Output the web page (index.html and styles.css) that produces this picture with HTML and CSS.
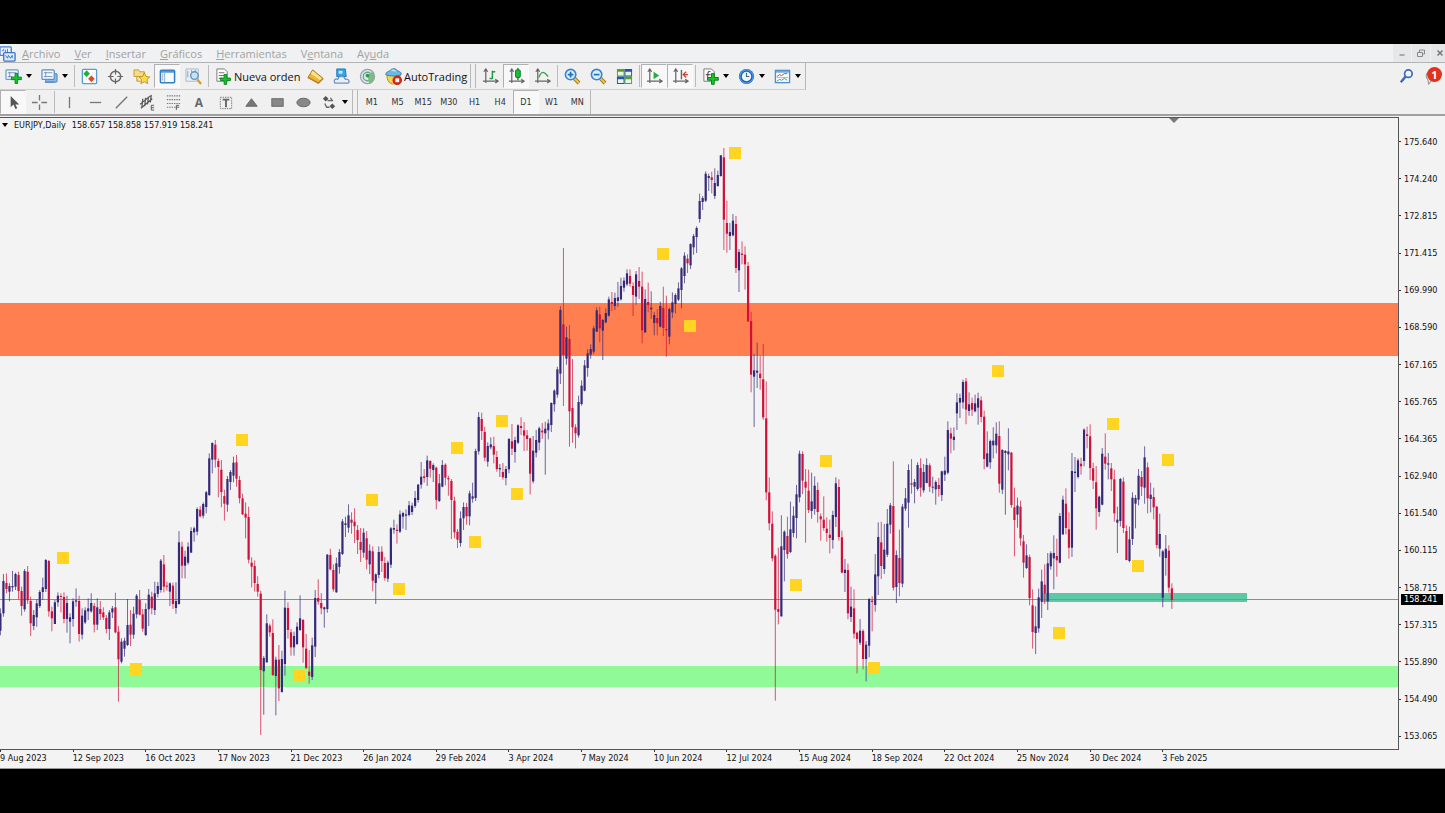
FILE: index.html
```html
<!DOCTYPE html>
<html lang="es">
<head>
    <meta charset="UTF-8">
    <title>EURJPY,Daily</title>
    <link rel="stylesheet" href="styles.css">
</head>
<body>
    <svg class="sprite" aria-hidden="true">
        <symbol id="plus" viewBox="0 0 18 18"><path d="M7 1h4v6h6v4h-6v6H7v-6H1V7h6z" fill="#19c52c" stroke="#087d18" stroke-width="1.4"/></symbol>
        <symbol id="app" viewBox="0 0 18 18"><rect x="1" y="2" width="12" height="9" rx="1" fill="#eaf3ff" stroke="#4a7fc8" stroke-width="1.4"/><path d="M3 6h2V4m2 4V5m2 3V4" stroke="#4a7fc8" fill="none"/><rect x="5" y="8" width="12" height="9" rx="1" fill="#dcecff" stroke="#3c74c4" stroke-width="1.4"/><path d="M7 11l2 3 1-3 2 3 2-3v3" stroke="#3c74c4" fill="none"/></symbol>
        <symbol id="newchart" viewBox="0 0 18 18"><rect x="1" y="2" width="13" height="10" rx="1" fill="#edf5fc" stroke="#6d9dcb" stroke-width="1.3"/><path d="M3 5h9M3 9h5M5 4v6" stroke="#7794ad"/><use href="#plus" x="6" y="5" width="12" height="12"/></symbol>
        <symbol id="profiles" viewBox="0 0 18 18"><rect x="5" y="6" width="12" height="9" rx="1" fill="#8cb9e7" stroke="#4b82bd"/><rect x="1" y="2" width="13" height="10" rx="1" fill="#f4f9ff" stroke="#5790ca" stroke-width="1.3"/><path d="M3 5h9M3 9h9M5 4v6" stroke="#7794ad"/><path d="M4 15h10" stroke="#5790ca" stroke-width="1.5"/></symbol>
        <symbol id="market" viewBox="0 0 18 18"><rect x="1.5" y="1.5" width="15" height="15" rx="1" fill="#fff" stroke="#5a9ad6" stroke-width="1.4"/><path d="M12 4v10M6 4v9" stroke="#dce5ef"/><path d="M6 2.5l3.5 3.5L6 9.500 2.500 6z" fill="#20ae35"/><path d="M11 8l3.500 3.500L11 15l-3.500-3.500z" fill="#e4472d"/></symbol>
        <symbol id="target" viewBox="0 0 18 18"><circle cx="9" cy="9" r="5.5" fill="none" stroke="#666" stroke-width="1.5"/><path d="M9 1v6m0 4v6M1 9h6m4 0h6" stroke="#666" stroke-width="1.3"/></symbol>
        <symbol id="navigator" viewBox="0 0 18 18"><path d="M1 2h5l1 2h5v5H1zM4 9v5h4" fill="#f7dc83" stroke="#c49b3b"/><path d="M12 5l1.8 4 4 .5-3 2.8.8 4.2-3.6-2-3.7 2 .8-4.2-3-2.8 4.1-.5z" fill="#ffdc48" stroke="#bd8f1c"/></symbol>
        <symbol id="terminal" viewBox="0 0 18 18"><rect x="1.5" y="2.5" width="15" height="13" rx="1" fill="#f8fbff" stroke="#347fc4" stroke-width="1.6"/><path d="M2 4h14" stroke="#5497d5" stroke-width="2"/><path d="M6 4v11" stroke="#7fb0de"/><path d="M4 6v8" stroke="#53627c" stroke-dasharray="1 1"/></symbol>
        <symbol id="tester" viewBox="0 0 18 18"><path d="M1 1h13v13H1z" fill="#e9f1f8" stroke="#a8b8c9"/><path d="M3 3v7m4-8v6m4-6v8" stroke="#8b9bad"/><circle cx="10" cy="8" r="4" fill="#c8e2f4" stroke="#6394be" stroke-width="1.5"/><path d="M13 12l4 5" stroke="#d79b32" stroke-width="2.4"/></symbol>
        <symbol id="order" viewBox="0 0 18 18"><path d="M2 1h8l3 3v10H2z" fill="#fff" stroke="#777"/><path d="M4 5h6M4 8h6M4 11h4" stroke="#777" stroke-width="1.2"/><use href="#plus" x="5" y="6" width="12" height="12"/></symbol>
        <symbol id="editor" viewBox="0 0 18 18"><path d="M6 2l11 9-5 5L1 10z" fill="#edb633" stroke="#a8731a"/><path d="M6 3l10 8-2 2-10-7z" fill="#ffe18b"/><path d="M1 10l11 6 5-5" fill="none" stroke="#b68430" stroke-width="1.5"/></symbol>
        <symbol id="vps" viewBox="0 0 18 18"><path d="M4 1h9l1 8H4z" fill="#35a3e9" stroke="#1c79bc"/><path d="M6 3h4v3H6z" fill="#c7ebff"/><path d="M2 16c-2-4 1-5 3-4 1-4 7-4 8 0 4-1 5 3 3 4z" fill="#e6effa" stroke="#7590bc" stroke-width="1.3"/></symbol>
        <symbol id="signals" viewBox="0 0 18 18"><circle cx="9" cy="9" r="7.5" fill="#e0e9e6" stroke="#8da4aa" stroke-width="1.3"/><circle cx="9" cy="9" r="4.5" fill="none" stroke="#789ba4" stroke-width="1.4"/><path d="M9 8l2 9c7-2 6-10 3-13z" fill="#80b982"/><circle cx="9" cy="8" r="2" fill="#2f9c46"/></symbol>
        <symbol id="auto" viewBox="0 0 18 18"><path d="M2 7h14c0 7-3 10-7 10S2 14 2 7z" fill="#f5d34e" stroke="#b58a25"/><path d="M1 7c-1-2 2-3 4-4 2-3 7-3 8 0 3 1 5 2 4 4-3 2-12 2-16 0z" fill="#6cb9e5" stroke="#327fae"/><path d="M6 3c2-2 5-2 6 1z" fill="#bce3f7"/><circle cx="13" cy="13" r="4.5" fill="#df2713" stroke="#b71505"/><rect x="11" y="11" width="4" height="4" fill="#fff"/></symbol>
        <symbol id="axes" viewBox="0 0 18 18"><path d="M4 2v14M1 14h15M2 4l2-3 2 3M14 12l3 2-3 2" fill="none" stroke="#666" stroke-width="1.3"/></symbol>
        <symbol id="bars" viewBox="0 0 18 18"><use href="#axes"/><path d="M11 3v9M11 4h3M8 11h3" stroke="#239a3b" stroke-width="1.6"/></symbol>
        <symbol id="candles" viewBox="0 0 18 18"><use href="#axes"/><path d="M10.5 0v13" stroke="#087d20" stroke-width="1.4"/><rect x="8" y="2" width="5" height="8" rx="1" fill="#1ebd35" stroke="#087d20"/></symbol>
        <symbol id="line" viewBox="0 0 18 18"><use href="#axes"/><path d="M5 10c3-7 5-7 10-1" fill="none" stroke="#3f9a50" stroke-width="1.4"/></symbol>
        <symbol id="zoomin" viewBox="0 0 18 18"><path d="M11 11l5 5" stroke="#9c731e" stroke-width="4"/><path d="M11 11l5 5" stroke="#f3c74f" stroke-width="2.2"/><circle cx="7" cy="7" r="5.5" fill="#d7efff" stroke="#3f84ca" stroke-width="1.7"/><path d="M4 7h6M7 4v6" stroke="#2670b7" stroke-width="1.8"/></symbol>
        <symbol id="zoomout" viewBox="0 0 18 18"><path d="M11 11l5 5" stroke="#9c731e" stroke-width="4"/><path d="M11 11l5 5" stroke="#f3c74f" stroke-width="2.2"/><circle cx="7" cy="7" r="5.5" fill="#d7efff" stroke="#3f84ca" stroke-width="1.7"/><path d="M4 7h6" stroke="#2670b7" stroke-width="1.8"/></symbol>
        <symbol id="tile" viewBox="0 0 18 18"><path d="M1 1h8v8H1zM9 9h8v8H9z" fill="#55a51c"/><path d="M9 1h8v8H9zM1 9h8v8H1z" fill="#2454ae"/><path d="M2 4h6v4H2zM10 4h6v4h-6zM2 12h6v4H2zM10 12h6v4h-6z" fill="#e8f4e6"/></symbol>
        <symbol id="scroll" viewBox="0 0 18 18"><use href="#axes"/><path d="M8 4l6 4-6 4z" fill="#28ad40"/></symbol>
        <symbol id="shift" viewBox="0 0 18 18"><use href="#axes"/><path d="M10 2v10" stroke="#4a6b8e" stroke-width="1.5"/><path d="M17 7h-5m3-3l-3 3 3 3" fill="none" stroke="#d5452a" stroke-width="1.5"/></symbol>
        <symbol id="indicators" viewBox="0 0 18 18"><path d="M2 1h8l3 3v10H2z" fill="#fff" stroke="#777"/><path d="M9 4c-3-1-3 1-3 8M4 7h5" fill="none" stroke="#555" stroke-width="1.2"/><use href="#plus" x="5" y="5" width="13" height="13"/></symbol>
        <symbol id="clock" viewBox="0 0 18 18"><circle cx="9" cy="9" r="8" fill="#1c5fb5"/><circle cx="9" cy="9" r="7" fill="none" stroke="#4d9fe6" stroke-width="1.2"/><circle cx="9" cy="9" r="5" fill="#edf6fd"/><path d="M9 5v4h3" fill="none" stroke="#48637e" stroke-width="1.2"/></symbol>
        <symbol id="templates" viewBox="0 0 18 18"><rect x="1.5" y="2.5" width="15" height="13" fill="#f8fcff" stroke="#4e8fc9" stroke-width="1.4"/><path d="M2 4h14" stroke="#70a8d8" stroke-width="2"/><path d="M3 9l3-2 2 1 3-2h3" fill="none" stroke="#b24a3a"/><path d="M3 10h12" stroke="#9cb9d0"/><path d="M3 14l3-2 2 1 3-2 3 2" fill="none" stroke="#36a14a"/></symbol>
        <symbol id="cursor" viewBox="0 0 18 18"><path d="M6 2v12l3-3 2 5 2-1-2-4h4z" fill="#555"/></symbol>
        <symbol id="cross" viewBox="0 0 18 18"><path d="M9 1v6m0 4v6M1 9h6m4 0h6" stroke="#777" stroke-width="1.4"/></symbol>
        <symbol id="vline" viewBox="0 0 18 18"><path d="M9 3v12" stroke="#777" stroke-width="1.4"/></symbol>
        <symbol id="hline" viewBox="0 0 18 18"><path d="M3 9h12" stroke="#777" stroke-width="1.4"/></symbol>
        <symbol id="trend" viewBox="0 0 18 18"><path d="M3 15L15 3" stroke="#777" stroke-width="1.5"/></symbol>
        <symbol id="channel" viewBox="0 0 18 18"><path d="M1 11L12 2M2 15L14 5M4 5l-1 9M7 4l-1 9M10 3L9 11M13 1l-1 8" stroke="#555" stroke-width="1.3"/><path d="M16 12h-3v5h3m-3-2.5h3" fill="none" stroke="#555"/></symbol>
        <symbol id="fibo" viewBox="0 0 18 18"><path d="M2 2h14M2 6h14M2 10h14M2 14h9" stroke="#777" stroke-width="1.2" stroke-dasharray="1.5 1"/><path d="M15 12h-3v5m0-3h3" fill="none" stroke="#555"/></symbol>
        <symbol id="label" viewBox="0 0 18 18"><rect x="3.5" y="3.5" width="12" height="12" fill="none" stroke="#777" stroke-dasharray="1.5 1"/><path d="M6 6h7M9.5 6v8" stroke="#666" stroke-width="2"/></symbol>
        <symbol id="triangle" viewBox="0 0 18 18"><path d="M9 5l6 8H3z" fill="#777" stroke="#666"/></symbol>
        <symbol id="rect" viewBox="0 0 18 18"><rect x="3" y="5" width="12" height="8" fill="#888" stroke="#666"/></symbol>
        <symbol id="ellipse" viewBox="0 0 18 18"><ellipse cx="9" cy="9" rx="7" ry="4.5" fill="#888" stroke="#666"/></symbol>
        <symbol id="arrows" viewBox="0 0 18 18"><path d="M5 2l3 3-3 3-3-3zM12 10l3 3-3 3-3-3z" fill="#555"/><path d="M7 7l5 0-2-3M4 10l2 4h3" fill="none" stroke="#666" stroke-width="1.4"/></symbol>
    </svg>

    <main class="terminal">
        <header class="menubar">
            <svg class="icon"><use href="#app"/></svg>
            <nav class="menu">
                <a href="#"><u>A</u>rchivo</a>
                <a href="#"><u>V</u>er</a>
                <a href="#"><u>I</u>nsertar</a>
                <a href="#"><u>G</u>ráficos</a>
                <a href="#"><u>H</u>erramientas</a>
                <a href="#">V<u>e</u>ntana</a>
                <a href="#">Ay<u>u</u>da</a>
            </nav>
            <div class="winbtns">
                <button aria-label="Minimizar"><svg viewBox="0 0 10 10"><path d="M2.5 7h5" stroke="#888" stroke-width="1.3"/></svg></button>
                <button aria-label="Restaurar"><svg viewBox="0 0 10 10"><path d="M3.5 4V2h5v4h-2M1.5 4.5h5v4h-5z" fill="none" stroke="#888"/></svg></button>
                <button aria-label="Cerrar"><svg viewBox="0 0 10 10"><path d="M2.5 2.5l5 5m0-5l-5 5" stroke="#777" stroke-width="1.5"/></svg></button>
            </div>
        </header>

        <div class="tools">
            <div class="toolrows">
                <div class="row row-main">
                    <button class="tool split" aria-label="Nuevo gráfico"><svg class="icon"><use href="#newchart"/></svg><i></i></button>
                    <button class="tool split" aria-label="Perfiles"><svg class="icon"><use href="#profiles"/></svg><i></i></button>
                    <span class="sep"></span>
                    <button class="tool" aria-label="Observación del mercado"><svg class="icon"><use href="#market"/></svg></button>
                    <button class="tool" aria-label="Ventana de datos"><svg class="icon"><use href="#target"/></svg></button>
                    <button class="tool" aria-label="Navegador"><svg class="icon"><use href="#navigator"/></svg></button>
                    <button class="tool on" aria-label="Terminal"><svg class="icon"><use href="#terminal"/></svg></button>
                    <button class="tool" aria-label="Probador"><svg class="icon"><use href="#tester"/></svg></button>
                    <span class="sep"></span>
                    <button class="tool text order"><svg class="icon"><use href="#order"/></svg>Nueva orden</button>
                    <button class="tool" aria-label="MetaEditor"><svg class="icon"><use href="#editor"/></svg></button>
                    <button class="tool" aria-label="VPS"><svg class="icon"><use href="#vps"/></svg></button>
                    <button class="tool" aria-label="Señales"><svg class="icon"><use href="#signals"/></svg></button>
                    <button class="tool text auto"><svg class="icon"><use href="#auto"/></svg>AutoTrading</button>
                    <span class="grip"></span>
                    <button class="tool" aria-label="Barras"><svg class="icon"><use href="#bars"/></svg></button>
                    <button class="tool on" aria-label="Velas"><svg class="icon"><use href="#candles"/></svg></button>
                    <button class="tool" aria-label="Línea"><svg class="icon"><use href="#line"/></svg></button>
                    <span class="sep"></span>
                    <button class="tool" aria-label="Acercar"><svg class="icon"><use href="#zoomin"/></svg></button>
                    <button class="tool" aria-label="Alejar"><svg class="icon"><use href="#zoomout"/></svg></button>
                    <button class="tool" aria-label="Mosaico"><svg class="icon"><use href="#tile"/></svg></button>
                    <span class="sep"></span>
                    <button class="tool on" aria-label="Autodesplazamiento"><svg class="icon"><use href="#scroll"/></svg></button>
                    <button class="tool on" aria-label="Desplazamiento"><svg class="icon"><use href="#shift"/></svg></button>
                    <span class="sep"></span>
                    <button class="tool split" aria-label="Indicadores"><svg class="icon"><use href="#indicators"/></svg><i></i></button>
                    <button class="tool split" aria-label="Períodos"><svg class="icon"><use href="#clock"/></svg><i></i></button>
                    <button class="tool split" aria-label="Plantillas"><svg class="icon"><use href="#templates"/></svg><i></i></button>
                </div>
                <div class="row row-draw">
                    <button class="tool on" aria-label="Cursor"><svg class="icon"><use href="#cursor"/></svg></button>
                    <button class="tool" aria-label="Cruz"><svg class="icon"><use href="#cross"/></svg></button>
                    <span class="sep"></span>
                    <button class="tool" aria-label="Línea vertical"><svg class="icon"><use href="#vline"/></svg></button>
                    <button class="tool" aria-label="Línea horizontal"><svg class="icon"><use href="#hline"/></svg></button>
                    <button class="tool" aria-label="Línea de tendencia"><svg class="icon"><use href="#trend"/></svg></button>
                    <button class="tool" aria-label="Canal"><svg class="icon"><use href="#channel"/></svg></button>
                    <button class="tool" aria-label="Fibonacci"><svg class="icon"><use href="#fibo"/></svg></button>
                    <button class="tool letter">A</button>
                    <button class="tool" aria-label="Etiqueta"><svg class="icon"><use href="#label"/></svg></button>
                    <button class="tool" aria-label="Triángulo"><svg class="icon"><use href="#triangle"/></svg></button>
                    <button class="tool" aria-label="Rectángulo"><svg class="icon"><use href="#rect"/></svg></button>
                    <button class="tool" aria-label="Elipse"><svg class="icon"><use href="#ellipse"/></svg></button>
                    <button class="tool split" aria-label="Flechas"><svg class="icon"><use href="#arrows"/></svg><i></i></button>
                    <span class="grip"></span>
                    <div class="periods">
                        <button>M1</button>
                        <button>M5</button>
                        <button>M15</button>
                        <button>M30</button>
                        <button>H1</button>
                        <button>H4</button>
                        <button class="on">D1</button>
                        <button>W1</button>
                        <button>MN</button>
                    </div>
                </div>
            </div>
            <div class="alerts">
                <button aria-label="Buscar"><svg class="icon" viewBox="0 0 18 18"><circle cx="11" cy="6" r="4" fill="#edf5ff" stroke="#4268b5" stroke-width="1.8"/><path d="M8 9l-5 6" stroke="#4268b5" stroke-width="2.6"/></svg></button>
                <button class="chat" aria-label="Mensajes"><svg class="icon" viewBox="0 0 18 18"><path d="M10 4c-6-1-10 3-6 8l1 5 3-4c4 1 7-1 7-4" fill="#f8f8f8" stroke="#999" stroke-width="1.2"/></svg><span class="badge">1</span></button>
            </div>
        </div>

        <section class="chart">
            <div class="left">
                <div class="plot">
                    <svg id="plot"></svg>
                    <div class="title"><i></i><span>EURJPY,Daily</span><span>158.657 158.858 157.919 158.241</span></div>
                </div>
                <div class="dates" id="dates"></div>
            </div>
            <div class="prices" id="prices">
                <span class="current">158.241</span>
            </div>
        </section>
    </main>
    <script src="chart.js"></script>
</body>
</html>
```
FILE: styles.css
```css
* {
    box-sizing: border-box;
}
body {
    margin: 0;
    background: #000;
    font-family: "Open Sans", "Noto Sans", sans-serif;
    font-size: 11px;
    color: #111;
}
button {
    margin: 0;
    padding: 0;
    border: 1px solid transparent;
    background: none;
    font: inherit;
    color: inherit;
}
.sprite {
    position: absolute;
    width: 0;
    height: 0;
}
.terminal {
    display: flex;
    flex-direction: column;
    height: 100vh;
    border-top: 44px solid #000;
    border-bottom: 44px solid #000;
    background: #f0f0f0;
    overflow: hidden;
}
.icon {
    width: 17px;
    height: 17px;
    flex: none;
}

/* menu */
.menubar {
    display: flex;
    align-items: center;
    height: 19px;
    border-bottom: 1px solid #b4b4b4;
    background: #f0f1f2;
}
.menubar .icon {
    margin-left: -1px;
}
.menu {
    display: flex;
    gap: 14px;
    flex: 1;
    padding-left: 6px;
}
.menu a {
    color: #a2a2a2;
    text-decoration: none;
}
.winbtns {
    display: flex;
    gap: 1px;
    margin-right: -4px;
}
.winbtns button {
    width: 18px;
    height: 18px;
    background: #e6e7e8;
}
.winbtns svg {
    display: block;
    width: 10px;
    height: 10px;
    margin: auto;
}

/* toolbars */
.tools {
    display: flex;
    justify-content: space-between;
    align-items: flex-start;
    height: 53px;
    border-bottom: 2px solid #a0a0a0;
}
.row {
    display: flex;
    align-items: center;
    width: max-content;
    height: 27px;
    border-right: 1px solid #b8b8b8;
    border-bottom: 1px solid #cfcfcf;
}
.row-draw {
    height: 24px;
    border-bottom: none;
}
.tool {
    display: flex;
    align-items: center;
    justify-content: center;
    width: 26px;
    height: 24px;
}
.tool.on,
.periods .on {
    border-color: #b0b0b0 #fafafa #fafafa #b0b0b0;
    background: #f8f8f8;
}
.split {
    width: 36px;
    gap: 4px;
}
.split i,
.title i {
    border: 3px solid transparent;
    border-top: 4px solid #000;
    border-bottom: none;
}
.text {
    gap: 2px;
    justify-content: flex-start;
    padding-left: 4px;
    font-size: 11px;
}
.order {
    width: 92px;
}
.auto {
    width: 90px;
}
.letter {
    font-size: 12px;
    font-weight: bold;
    color: #666;
}
.sep {
    width: 1px;
    height: 22px;
    margin: 0 1px 0 2px;
    background: #bbb;
}
.grip {
    width: 6px;
    height: 24px;
    border: 1px solid #b8b8b8;
    border-width: 0 1px;
    margin-right: 1px;
}
.periods {
    display: flex;
    width: 231px;
    height: 24px;
}
.periods button {
    flex: 1 1 0;
    font-family: "DejaVu Sans Condensed", "DejaVu Sans", sans-serif;
    font-size: 9px;
    color: #333;
}
.alerts {
    display: flex;
    padding: 4px 2px 0 0;
    gap: 4px;
}
.alerts button {
    position: relative;
    width: 22px;
    height: 20px;
}
.badge {
    position: absolute;
    top: -1px;
    right: 0;
    width: 15px;
    height: 15px;
    border-radius: 50%;
    background: #e0321c;
    color: #fff;
    font-weight: bold;
    line-height: 15px;
    text-align: center;
}

/* chart */
.chart {
    display: flex;
    flex: 1;
    min-height: 0;
    padding-top: 1px;
    background: #f3f3f3;
    border-bottom: 1px solid #999;
    font-family: "DejaVu Sans Condensed", "DejaVu Sans", sans-serif;
    font-size: 9px;
}
.left {
    display: flex;
    flex-direction: column;
    flex: 1;
    min-width: 0;
}
.plot {
    position: relative;
    flex: 1;
    border: 1px solid #555;
    border-left: none;
    overflow: hidden;
}
.plot svg {
    display: block;
    width: 100%;
    height: 100%;
}
.title {
    position: absolute;
    top: 1px;
    left: 2px;
    display: flex;
    align-items: center;
    gap: 6px;
    line-height: 12px;
}
.dates {
    display: flex;
    width: 1235px;
    height: 18px;
    line-height: 16px;
    white-space: nowrap;
}
.dates span {
    position: relative;
    flex: 1 1 0;
}
.dates span::before {
    content: "";
    position: absolute;
    width: 1px;
    height: 2px;
    background: #333;
}
.prices {
    position: relative;
    display: flex;
    flex-direction: column;
    width: 46px;
    padding: 6px 0 13px;
}
.prices .level {
    display: flex;
    align-items: center;
    flex: 1;
    gap: 3px;
}
.prices .level::before {
    content: "";
    width: 2px;
    height: 1px;
    background: #333;
}
.current {
    position: absolute;
    top: 477px;
    left: 2px;
    right: 2px;
    height: 11px;
    padding-left: 3px;
    background: #000;
    color: #fff;
    line-height: 11px;
}

.up {
    fill: #352a78;
}
.down {
    fill: #d0103a;
}
.wick {
    opacity: 0.7;
}
.supply {
    fill: #ff7f50;
}
.demand {
    fill: #90fa98;
}
.entry {
    fill: #5cc8a6;
}
.bid {
    fill: #8090a0;
}
.swing {
    fill: #ffd521;
}
.marker {
    fill: #777780;
}
```
FILE: chart.js
```javascript
// Distance between two bars and the window y of the plot's first row
const STEP = 3.027;
const TOP = 118;

// Each block: start y, then "colour high bodyTop bodyBottom low" in thirds of a pixel
const blocks = [
    [420, `b 565 580 632 646|b 462 483 580 590|r 460 489 507 520|b 490 498 515 544|b 453 498 502 515|b 458 462 500 510
r 455 465 513 538|r 500 513 558 587|b 447 453 568 575|r 438 455 541 552|r 530 543 610 648|b 570 585 618 630
b 538 550 592 620|b 510 516 558 564|b 473 502 516 540|b 417 420 507 516|r 420 423 574 590|r 560 574 595 634
b 540 547 612 612|b 517 527 547 560|r 520 528 531 577|r 517 531 597 610|b 527 549 597 638|b 580 592 605 670
b 535 544 597 620|b 505 541 545 560|r 527 543 642 665|b 565 587 644 658|b 562 571 607 612|b 535 565 574 600
b 520 549 574 578|r 549 558 614 637|b 535 562 614 630|r 543 567 582 600|r 562 577 592 600|r 585 594 627 640
b 570 577 627 660|b 558 565 577 594|r 518 562 637 640|r 618 635 718 845|b 655 665 725 730|b 653 662 686 710
b 537 615 675 678|r 570 614 644 678|b 560 581 644 656|b 522 527 583 595|r 510 540 584 586|r 567 583 626 635
b 550 567 645 648|b 507 524 568 618|r 515 530 565 583|b 485 520 570 585|b 486 498 522 532|b 417 422 510 518
r 405 433 500 517|r 485 497 500 512|b 487 490 515 558|r 488 497 552 567|b 487 543 564 581|b 333 367 552 554
r 365 380 437 475|b 392 410 437 475|b 367 380 428 434|b 322 333 398 398|b 320 325 337 365|b 262 267 335 346
r 258 269 289 292|b 247 252 287 295|b 213 217 261 280|b 100 115 225 228|b 67 69 119 160|r 60 74 119 143
r 115 123 141 232|r 120 149 216 262|r 209 228 251 302|b 168 177 254 275|b 150 156 186 210|b 110 128 167 187
r 105 127 176 200|r 168 180 235 250|r 221 235 283 285|r 247 281 293 355|r 260 291 419 430|r 412 428 440 502
r 421 438 489 515|r 469 492 515 530|r 512 521 750 945|b 708 714 754 884|b 583 610 727 728|r 611 617 637 650
r 598 639 765 768|b 710 719 768 886|r 675 719 805 843|b 692 717 816 818|b 512 563 732 767|r 547 564 630 656
r 627 637 682 707|b 635 648 682 707|b 607 620 672 675|b 526 595 630 633|r 597 600 682 728|r 642 686 744 747
r 690 755 767 791|b 653 676 771 780|b 510 534 680 711|r 478 534 545 554|r 519 549 565 583|b 560 562 568 623
b 402 404 567 578|r 386 405 448 451|r 433 450 508 515|b 413 430 517 518|b 387 396 441 461|b 297 304 402 405
b 290 310 315 351|b 253 286 323 338|r 277 299 308 341|r 265 305 319 369|r 315 330 360 402|r 324 366 390 426
b 325 338 398 413|r 333 355 419 448|b 373 392 433 462|r 379 394 482 514|b 460 463 489 552|b 379 396 465 475
r 379 395 423 456|r 411 429 474 482|b 422 428 476 486|b 321 325 434 444|b 299 324 329 341|r 313 329 333 371
b 271 283 335 339|b 275 279 290 326|b 268 283 287 330|b 243 256 285 289|b 248 257 276 285|b 213 234 258 264
b 192 194 240 248|b 126 170 194 206|r 147 169 174 188|b 107 121 171 198|r 121 123 146 173|b 130 135 150 186
r 140 143 240 268`],
    [380, `b 282 310 363 366|b 240 255 320 322|r 250 254 293 316|r 287 294 298 347|r 297 303 360 477|r 350 362 457 475
r 447 455 479 504|b 394 415 489 500|b 367 381 415 450|r 369 381 409 434|b 332 340 409 436|b 308 349 356 368
b 206 213 354 363|b 96 111 214 224|r 98 117 153 180|r 140 156 233 244|b 187 198 245 260|b 172 193 202 208
r 170 198 224 250|r 213 231 267 275|b 252 264 268 291|r 249 276 292 299|b 258 267 294 316|b 174 177 268 280
r 132 184 206 225|b 170 180 216 248|b 133 136 188 192|r 112 138 144 165|r 126 151 167 213|r 150 166 177 212
r 173 175 281 343|b 168 212 304 310|b 150 180 218 232|b 140 145 188 211|r 129 152 157 177|b 125 146 160 284
b 118 130 151 178|b 67 69 135 156|b 28 32 73 95`],
    [130, `b 710 718 794 803|b 529 540 731 762|r 354 583 675 828|b 590 622 686 704|r 585 627 844 950|r 687 834 892 938
r 883 892 910 955|b 797 816 916 923|b 751 767 822 827|b 690 706 782 784|b 658 670 714 740|b 643 657 674 686
b 588 595 665 672|b 532 541 605 606|r 530 553 595 637|b 567 570 602 690|b 535 549 577 580|b 500 508 557 560
r 486 516 522 543|b 488 504 528 540|b 456 502 513 530|b 443 468 508 512|b 442 452 473 485|b 418 430 463 468
r 418 438 461 470|r 457 468 495 558|b 423 433 500 524|r 411 453 470 507|r 425 470 601 640|b 478 507 607 609
r 458 516 525 547|b 484 533 538 566|b 545 555 579 616|r 537 564 580 616|b 515 528 590 592|r 470 534 594 618
r 497 597 601 680|b 533 537 620 643|b 487 517 547 564|b 490 495 522 550|b 457 475 509 513|b 411 415 480 535
b 367 377 438 460|r 373 386 400 429|b 340 342 406 417|b 312 318 352 374|b 289 294 321 369|b 191 213 267 278
b 198 204 216 240|b 124 131 212 216|b 131 138 144 183|r 125 142 150 190|b 115 159 198 207|b 122 135 168 170
b 75 76 138 140|r 54 82 269 360|r 212 279 311 368|b 279 306 318 360|b 252 272 316 319|r 258 282 414 429
b 357 366 421 486|r 334 371 375 403|r 349 374 403 479|r 396 408 574 576`],
    [320, `r -25 3 164 217|b 102 151 170 321|b 68 152 158 204|r 106 161 174 209|r 72 178 292 300|r 184 295 517 541
r 472 517 610 631|r 574 611 715 724|r 703 707 869 1142|r 683 867 876 913|b 586 679 889 890|b 631 635 690 784
r 590 648 702 716|b 545 628 696 699|b 559 587 639 652|b 495 523 594 655|b 392 401 532 547|r 394 402 482 522
r 447 485 503 668|r 449 512 570 579|b 458 544 573 596|b 469 497 567 584|r 487 510 576 608|r 580 589 598 662
r 529 599 624 632|r 592 626 639 665|r 599 644 654 700|b 572 585 660 686|b 472 490 591 621|r 478 501 651 662
r 632 652 758 760|b 717 749 759 816|r 731 750 880 898|b 800 860 891 906|r 808 865 941 955|r 935 938 957 1060
b 897 932 968 975|r 928 933 1017 1048|b 963 974 1017 1084|b 834 837 977 1012|r 829 842 846 934|b 702 763 855 875
b 607 651 769 825|r 605 667 738 777|b 612 689 747 762|b 567 611 704 711|b 549 556 614 641|r 424 558 803 812
b 691 705 801 849|r 629 714 789 829|b 552 560 791 802|b 504 535 566 573|b 433 450 548 623|r 417 490 494 521
b 477 486 500 550|b 427 435 507 512|r 415 444 503 530|b 432 456 511 518|b 415 435 489 490|r 430 436 500 516
b 470 500 503 520|b 481 486 508 554|r 474 495 507 530|b 452 454 525 543|b 410 452 464 483|b 304 330 458 463
r 323 340 356 400|b 322 350 360 391|b 220 247 280 330`],
    [360, `b 101 114 128 174|b 59 66 127 146|r 54 64 149 193|b 97 133 153 167|r 113 129 149 168|b 104 130 154 157
b 98 115 143 194|r 109 121 171 187|r 152 170 297 328|b 214 280 320 322|b 239 243 307 326|b 202 242 256 295
b 187 221 256 280|r 184 228 371 398|b 267 270 389 402|b 270 273 279 464|b 205 274 283 331|r 276 278 435 443
r 383 442 480 589|b 413 437 464 503|r 422 440 535 557|r 525 544 608 653|b 553 586 624 627|r 584 591 714 736
r 688 736 816 866|b 739 799 819 882|b 686 712 805 818|b 629 664 725 774|r 613 674 700 732|b 579 610 724 750
b 574 580 619 629`],
    [400, `b 406 459 475 568|r 416 468 481 530|b 339 348 488 490|b 287 299 403 405|r 265 311 384 403|r 337 388 443 476
b 159 213 443 471|b 171 215 219 276|b 175 181 231 236|r 173 191 199 224|b 85 89 183 199|r 80 103 108 145
r 73 109 204 240|r 188 205 242 267|r 198 247 325 389|b 287 290 336 350|b 144 161 314 316|r 100 170 191 209
b 159 190 194 238|r 189 205 238 273|r 209 238 340 365|b 320 359 368 459|b 234 237 363 379|r 232 245 384 399
r 376 393 480 481|b 380 418 483 487|b 277 293 417 435|b 285 294 311 385|b 207 227 299 316|r 213 231 260 288
b 139 172 263 311|r 187 202 295 340|b 248 284 297 337|r 263 291 322 358|r 318 320 435 445|b 341 402 446 470
b 450 454 593 622|b 405 446 474 527|r 436 452 563 578|r 550 565 600 627`]
];

const swings = [
    [57, 552], [130, 663], [236, 434], [293, 670], [366, 494], [393, 583], [451, 442],
    [469, 536], [496, 415], [511, 488], [657, 248], [684, 320], [729, 147], [790, 579],
    [820, 455], [868, 662], [992, 365], [1053, 627], [1107, 418], [1132, 560], [1162, 454]
];

const dates = ["9 Aug 2023", "12 Sep 2023", "16 Oct 2023", "17 Nov 2023", "21 Dec 2023",
    "26 Jan 2024", "29 Feb 2024", "3 Apr 2024", "7 May 2024", "10 Jun 2024", "12 Jul 2024",
    "15 Aug 2024", "18 Sep 2024", "22 Oct 2024", "25 Nov 2024", "30 Dec 2024", "3 Feb 2025"];

const prices = ["175.640", "174.240", "172.815", "171.415", "169.990", "168.590", "167.165",
    "165.765", "164.365", "162.940", "161.540", "160.115", "158.715", "157.315", "155.890",
    "154.490", "153.065"];

const plot = document.getElementById("plot");

function rect(cls, x, y, w, h) {
    const el = document.createElementNS("http://www.w3.org/2000/svg", "rect");
    el.setAttribute("class", cls);
    el.setAttribute("x", x);
    el.setAttribute("y", y - TOP);
    el.setAttribute("width", w);
    el.setAttribute("height", h);
    plot.appendChild(el);
}

rect("supply", 0, 303, "100%", 53);
rect("demand", 0, 666, "100%", 21);
rect("entry", 1041, 593, 206, 9);
rect("bid", 0, 599, "100%", 1);

let i = 0;
blocks.forEach(([start, rows]) => {
    rows.split(/[|\n]/).forEach(row => {
        const [c, ...v] = row.split(" ");
        const [high, top, bottom, low] = v.map(n => start + n / 3);
        const cls = c === "b" ? "up" : "down";
        const x = i * STEP + 0.4;
        rect(cls + " wick", x - 0.5, high, 1, low - high);
        rect(cls, x - 1.1, top, 2.2, Math.max(bottom - top, 1));
        i++;
    });
});

swings.forEach(([x, y]) => rect("swing", x, y, 12, 12));

const marker = document.createElementNS("http://www.w3.org/2000/svg", "path");
marker.setAttribute("class", "marker");
marker.setAttribute("d", "M1169 0h10l-5 5z");
plot.appendChild(marker);

function labels(id, list, cls) {
    const box = document.getElementById(id);
    list.forEach(text => {
        const el = document.createElement("span");
        el.className = cls;
        el.textContent = text;
        box.appendChild(el);
    });
}

labels("dates", dates, "date");
labels("prices", prices, "level");
```
